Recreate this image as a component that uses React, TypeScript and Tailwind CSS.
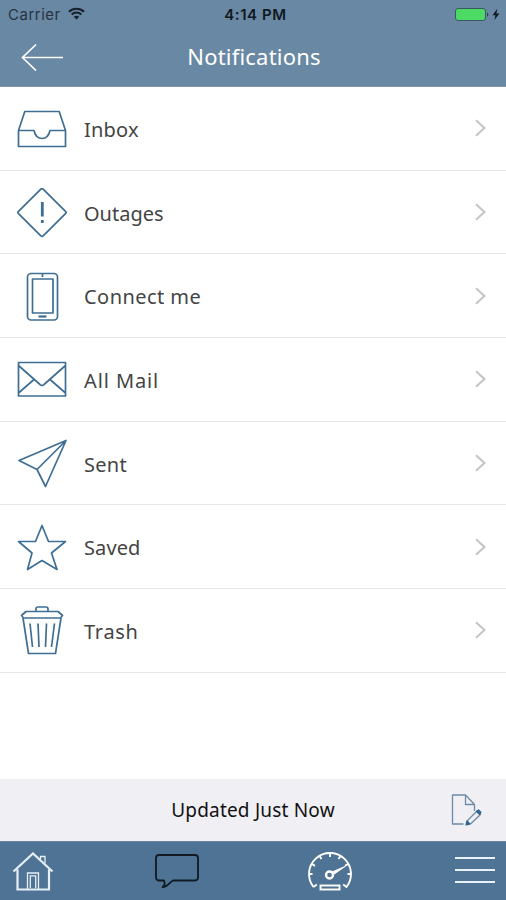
import { ReactNode } from "react";

type MenuItem = {
  label: string;
  icon: ReactNode;
  tracking: string;
};

const MENU_ITEMS: MenuItem[] = [
  {
    label: "Inbox",
    tracking: "tracking-[0.2px]",
    icon: (
      <path d="M1.5 26.5 7.8 7.5H42.2L48.5 26.5V42.5H1.5V26.5H17C18 31 21 34.5 25 34.5S32 31 33 26.5H48.5" />
    ),
  },
  {
    label: "Outages",
    tracking: "tracking-[0px]",
    icon: (
      <>
        <path d="M23.6 1.3Q25 0 26.4 1.3L48.5 23.3Q49.7 24.5 48.5 25.7L26.4 47.7Q25 49 23.6 47.7L1.5 25.7Q.3 24.5 1.5 23.3Z" />
        <path d="M25.3 14V28.5M25.3 32V35" strokeWidth="2.8" />
      </>
    ),
  },
  {
    label: "Connect me",
    tracking: "tracking-[0.45px]",
    icon: (
      <>
        <rect x="10.5" y="1.5" width="30" height="46.5" rx="3.5" />
        <path d="M15.5 7H36V41H15.5ZM25.5 2V5" />
        <path d="M21.5 44.5H29.5" strokeWidth="2.2" />
      </>
    ),
  },
  {
    label: "All Mail",
    tracking: "tracking-[0.9px]",
    icon: (
      <path d="M1.5 7.5H48.5V41H1.5ZM1.5 10.5 23 29.5Q25 31.5 27 29.5L48.5 10.5M1.5 38 17 24.5M48.5 38 33 24.5" />
    ),
  },
  {
    label: "Sent",
    tracking: "tracking-[0.3px]",
    icon: <path d="M2 21.5 49 1.5 28.5 47.5 20 30.5ZM49 1.5 20 30.5" />,
  },
  {
    label: "Saved",
    tracking: "tracking-[0.1px]",
    icon: (
      <path d="M25 2.5 31.5 18.5H48.5L34.5 30 40 46.5 25 37.5 10.5 46.5 15 30 1.5 18.5H18.5Z" />
    ),
  },
  {
    label: "Trash",
    tracking: "tracking-[0.7px]",
    icon: (
      <>
        <path d="M4.5 9.5 9 5.5H41L45.5 9.5 43.5 12H6.5Z" />
        <path d="M19 5.5V3Q19 1 21 1H29Q31 1 31 3V5.5M6 12 11.5 47.5H38.5L44 12" />
        <path d="M13 17.5 15.5 41M21 17.5 22 41M29.5 17.5 28.5 41M37.5 17.5 34.5 41" />
      </>
    ),
  },
];

function StatusBar() {
  return (
    <div className="relative flex h-[29px] items-center justify-between pl-[8px] pr-[5px] pt-px font-['Inter','Liberation_Sans',sans-serif] text-[15px] text-[#17212b]">
      <div className="flex items-center gap-[7px]">
        <span className="tracking-[0.5px] text-[#26333f]">Carrier</span>
        <svg className="-mt-[3px] h-[13px] w-[17px]" viewBox="0 0 17 13" fill="none" stroke="currentColor" strokeWidth="2.1">
          <path d="M1 4.7C5.2.7 11.8.7 16 4.7M3.7 7.5C6.4 4.9 10.6 4.9 13.3 7.5" />
          <path d="M8.5 12.5 5.8 9.7C7.3 8.3 9.7 8.3 11.2 9.7Z" fill="currentColor" stroke="none" />
        </svg>
      </div>
      <span className="absolute left-0 w-full pl-[5px] text-center text-[15px] font-semibold tracking-[0.6px] text-[#101820]">
        4:14 PM
      </span>
      <svg className="-mt-[2px] h-[15px] w-[46px]" viewBox="0 0 46 15">
        <rect x="0.5" y="1.5" width="30" height="12" rx="2.5" fill="#4cd964" stroke="#3a5a62" />
        <path d="M32.3 5.2Q34.3 7.5 32.3 9.8Z" fill="#17212b" />
        <path d="M42.3 1.8 37.5 8.2H40.5L39.3 13 44.5 6.5H41.4Z" fill="#101820" />
      </svg>
    </div>
  );
}

function Header({ title }: { title: string }) {
  return (
    <header className="h-[87px] border-b border-[#7d97ae] bg-[#6988a4]">
      <StatusBar />
      <div className="relative flex h-[56px] items-center justify-center">
        <button className="absolute left-[21px] top-[14px]" aria-label="back">
          <svg className="h-[28px] w-[43px]" viewBox="0 0 43 28" fill="none" stroke="white" strokeWidth="1.7">
            <path d="M42 14.5H1.5M15 1.5 1.5 14.5 15 27.5" />
          </svg>
        </button>
        <h1 className="pb-[2px] pl-[2px] text-[22px] tracking-[0.2px] text-white">{title}</h1>
      </div>
    </header>
  );
}

function MenuRow({ label, icon, tracking }: MenuItem) {
  return (
    <li className="flex h-[83.7px] items-center border-b border-[#e6e6e6] pl-[17px] pr-[20px]">
      <svg className="mt-[2px] h-[50px] w-[50px]" viewBox="0 0 50 50" fill="none" stroke="#3f6e94" strokeWidth="1.7" strokeLinejoin="round">
        {icon}
      </svg>
      <span className={`ml-[17px] flex-1 pt-[3px] text-[20px] text-[#444] ${tracking}`}>
        {label}
      </span>
      <svg className="h-[18px] w-[11px]" viewBox="0 0 11 18" fill="none" stroke="#c4c4c8" strokeWidth="2">
        <path d="M1 1.2 9.5 9 1 16.8" />
      </svg>
    </li>
  );
}

function UpdateBar() {
  return (
    <div className="relative flex h-[62px] items-center justify-center bg-[#efeff4]">
      <p className="text-[19px] tracking-[0.2px] text-[#111]">Updated Just Now</p>
      <button className="absolute right-[24px] top-[15px]" aria-label="compose">
        <svg className="h-[32px] w-[31px]" viewBox="0 0 31 32" fill="none" stroke="#6d8ba6" strokeWidth="1.3" strokeLinejoin="round">
          <path d="M12.5 30H1.5V1H14.5L23.5 10.5V17M14.5 1V10.5H23.5" />
          <path d="M16 27 26 17 29.5 20.5 19.5 30" />
          <path d="M16 27 15 30.8 19 30ZM25.5 17.5 27.5 16 29.8 18.3 28.5 20.3Z" fill="#2f658f" stroke="#2f658f" />
        </svg>
      </button>
    </div>
  );
}

function BottomNav() {
  return (
    <nav className="flex h-[59px] items-start justify-between border-t border-[#67859f] bg-[#4e7395] pl-[12px] pr-[11px] pt-[9px]">
      <svg className="h-[42px] w-[42px]" viewBox="0 0 42 42" fill="none" stroke="#e6f0f8" strokeWidth="2.2">
        <path d="M1.5 20.5 21 2.5 40.5 20.5M5.5 18.5V38.5H37V18.5" />
        <path d="M15.5 38V22H26.5V38M18.3 37V24.8H23.7V37M28.5 8V5.5H33V12.5" strokeWidth="1.3" />
      </svg>
      <svg className="mt-px h-[38px] w-[46px] -translate-x-[3px]" viewBox="0 0 46 38" fill="none" stroke="#101a23" strokeWidth="1.8" strokeLinejoin="round">
        <path d="M5 3H41Q44 3 44 6V25Q44 28.5 41 28.5H19C16 29.5 14 35 8.5 35C11 33.5 11 31 10 28.5H5Q2 28.5 2 25V6Q2 3 5 3Z" />
      </svg>
      <svg className="h-[40px] w-[46px] translate-x-px" viewBox="0 0 46 40" fill="none" stroke="white" strokeWidth="1.9">
        <path d="M6.5 36A21 21 0 1 1 39.5 36L36.2 33.5M6.5 36 9.8 33.5" />
        <path d="M2 23H5.5M4.8 13 8 14.8M12.5 5 14.5 8M23 2V6M33.5 5 31.5 8M41.2 13 38 14.8M44 23H40.5" />
        <circle cx="22.5" cy="24" r="3.5" strokeWidth="2.4" />
        <path d="M25 21 38 15.5 26.5 23.5Z" fill="white" strokeWidth="1" />
        <rect x="13.5" y="34.5" width="19" height="4" />
      </svg>
      <svg className="mt-[4px] h-[30px] w-[40px]" viewBox="0 0 40 30" stroke="#e8f1f8" strokeWidth="2">
        <path d="M0 3H40M0 15H40M0 27H40" />
      </svg>
    </nav>
  );
}

function App() {
  return (
    <div className="flex h-[900px] w-[506px] flex-col overflow-hidden bg-white font-['Noto_Sans','Open_Sans',sans-serif]">
      <Header title="Notifications" />
      <ul className="flex-1">
        {MENU_ITEMS.map((item) => (
          <MenuRow key={item.label} {...item} />
        ))}
      </ul>
      <UpdateBar />
      <BottomNav />
    </div>
  );
}

export default App;
